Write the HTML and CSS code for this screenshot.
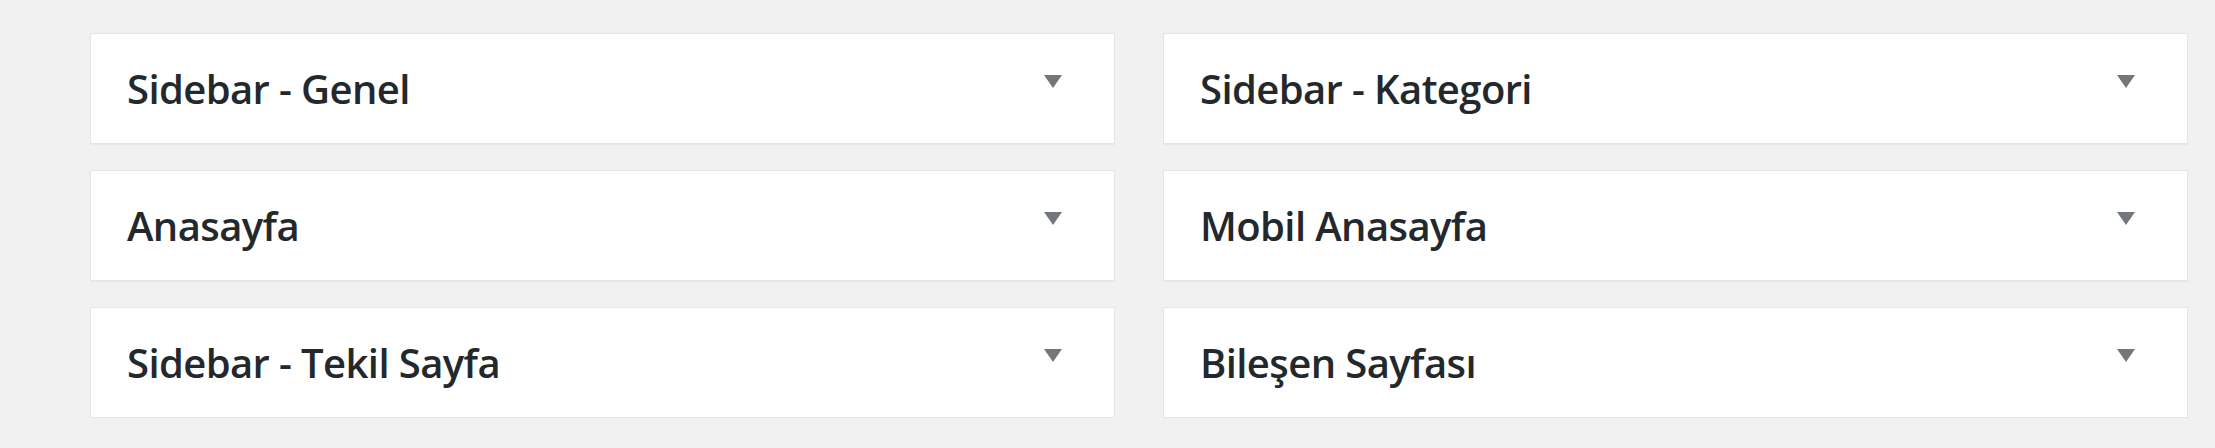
FILE: index.html
```html
<!DOCTYPE html>
<html lang="en">
<head>
    <meta charset="UTF-8">
    <title>Bileşenler</title>
    <link rel="stylesheet" href="styles.css">
</head>
<body>

    <div class="widgets">
        <div class="sidebar-col">
            <div class="sidebar-box">
                <h2>Sidebar - Genel</h2>
                <span class="toggle"></span>
            </div>
            <div class="sidebar-box">
                <h2>Anasayfa</h2>
                <span class="toggle"></span>
            </div>
            <div class="sidebar-box">
                <h2>Sidebar - Tekil Sayfa</h2>
                <span class="toggle"></span>
            </div>
        </div>
        <div class="sidebar-col">
            <div class="sidebar-box">
                <h2>Sidebar - Kategori</h2>
                <span class="toggle"></span>
            </div>
            <div class="sidebar-box">
                <h2>Mobil Anasayfa</h2>
                <span class="toggle"></span>
            </div>
            <div class="sidebar-box">
                <h2>Bileşen Sayfası</h2>
                <span class="toggle"></span>
            </div>
        </div>
    </div>

</body>
</html>
```

FILE: styles.css
```css
/* Widget area */
body {
    margin: 0;
    padding: 0;
    background-color: #f1f1f1;
    font-family: "Open Sans", "Noto Sans", sans-serif;
    color: #23282d;
}

.widgets {
    display: flex;
    gap: 48px;
    padding: 33px 27px 0 90px;
}

.sidebar-col {
    flex: 1;
    display: flex;
    flex-direction: column;
    gap: 26px;
}

.sidebar-box {
    display: flex;
    align-items: center;
    justify-content: space-between;
    height: 109px;
    padding: 0 52px 0 36px;
    background: #fff;
    border: 1px solid #e5e5e5;
    box-shadow: 0 1px 1px rgba(0, 0, 0, 0.04);
}

.sidebar-box h2 {
    margin: 0;
    font-size: 40px;
    font-weight: 600;
    letter-spacing: -0.6px;
    line-height: 1;
}

.toggle {
    align-self: flex-start;
    margin-top: 41px;
    width: 0;
    height: 0;
    border-left: 9px solid transparent;
    border-right: 9px solid transparent;
    border-top: 13px solid #72777c;
}
```
